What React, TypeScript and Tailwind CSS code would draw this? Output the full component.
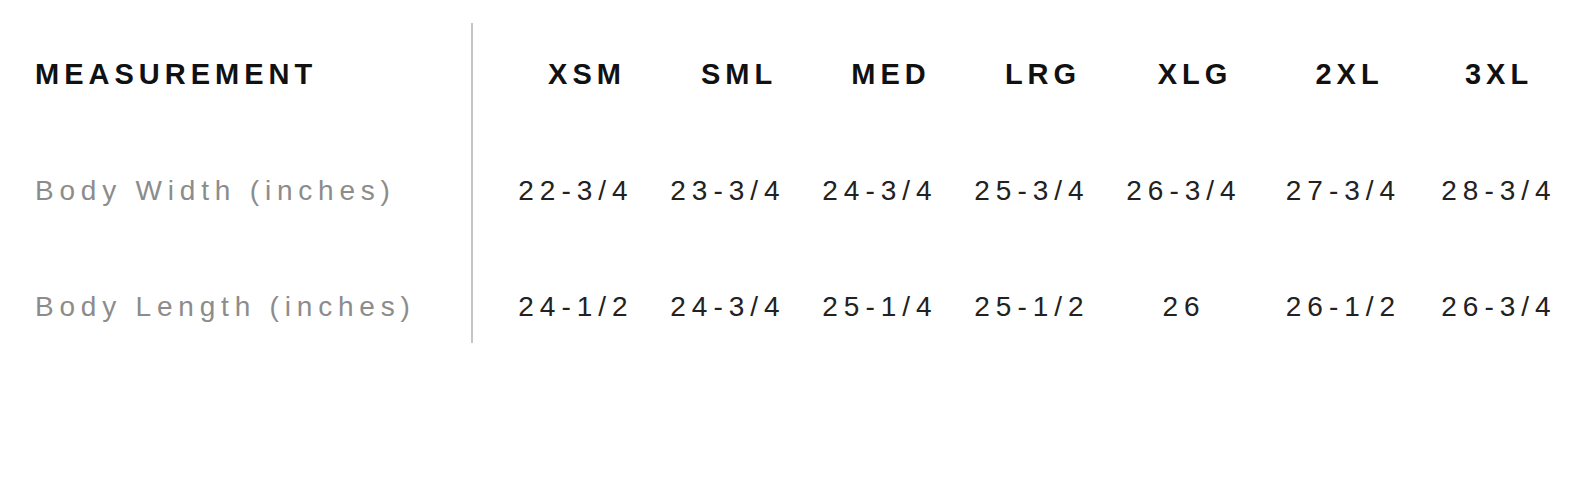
import React from "react";

const sizes = ["XSM", "SML", "MED", "LRG", "XLG", "2XL", "3XL"];
const widths = ["22-3/4", "23-3/4", "24-3/4", "25-3/4", "26-3/4", "27-3/4", "28-3/4"];
const lengths = ["24-1/2", "24-3/4", "25-1/4", "25-1/2", "26", "26-1/2", "26-3/4"];
const headerPad = ["pl-[22px]", "pl-[22px]", "pl-[22px]", "pl-[22px]", "pl-[22px]", "pl-[12px]", "pl-0"];

export default function App() {
  return (
    <div
      className="w-[1571px] h-[477px] bg-white pt-[16px] overflow-hidden"
      style={{ fontFamily: '"Liberation Sans", Arial, sans-serif' }}
    >
      <div className="grid grid-cols-[471px_2px_27px_152px_152px_152px_152px_152px_167px_144px] grid-rows-[116px_117px_116px]">
        {/* Row 1 */}
        <div className="col-start-1 row-start-1 flex items-center pl-[35px] text-[29px] font-bold tracking-[5px] text-[#111111] leading-none">
          MEASUREMENT
        </div>
        <div className="col-start-2 row-start-1 row-span-3 mt-[7px] mb-[22px] bg-[#c4c4c4]" />
        {sizes.map((s, i) => (
          <div
            key={s}
            className={`row-start-1 flex items-center justify-center text-[29px] font-bold tracking-[5px] text-[#111111] leading-none ${headerPad[i]}`}
            style={{ gridColumnStart: i + 4 }}
          >
            {s}
          </div>
        ))}

        {/* Row 2 */}
        <div className="col-start-1 row-start-2 flex items-center pl-[35px] text-[28px] tracking-[5.8px] text-[#8c8c8c] leading-none">
          Body Width (inches)
        </div>
        {widths.map((v, i) => (
          <div
            key={"w" + i}
            className="row-start-2 flex items-center justify-center text-[28px] tracking-[6px] text-[#222222] leading-none"
            style={{ gridColumnStart: i + 4 }}
          >
            {v}
          </div>
        ))}

        {/* Row 3 */}
        <div className="col-start-1 row-start-3 flex items-center pl-[35px] text-[28px] tracking-[5.8px] text-[#8c8c8c] leading-none">
          Body Length (inches)
        </div>
        {lengths.map((v, i) => (
          <div
            key={"l" + i}
            className="row-start-3 flex items-center justify-center text-[28px] tracking-[6px] text-[#222222] leading-none"
            style={{ gridColumnStart: i + 4 }}
          >
            {v}
          </div>
        ))}
      </div>
    </div>
  );
}
